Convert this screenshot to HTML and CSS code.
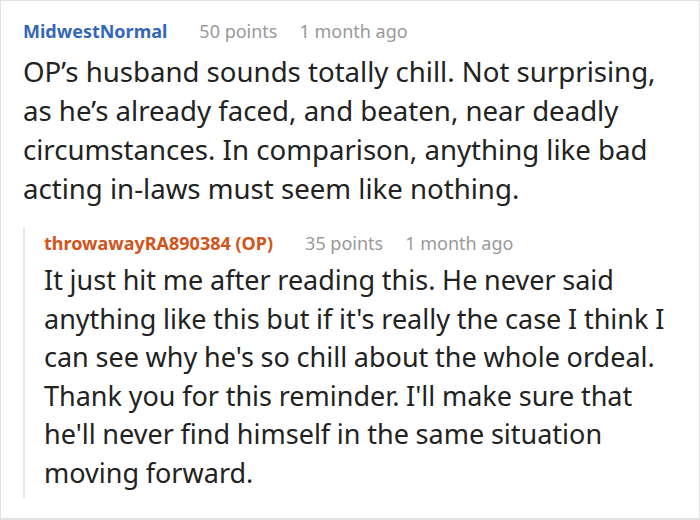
FILE: index.html
```html
<!DOCTYPE html>
<html>
<head>
<meta charset="utf-8">
<link rel="stylesheet" href="styles.css">
</head>
<body>
<div class="frame">
  <div class="comment">
    <div class="meta">
      <span class="user">MidwestNormal</span>
      <span class="info">50 points</span>
      <span class="info">1 month ago</span>
    </div>
    <p class="text main-text">OP’s husband sounds totally chill. Not surprising, as he’s already faced, and beaten, near deadly circumstances. In comparison, anything like bad acting in-laws must seem like nothing.</p>
    <div class="reply">
      <div class="meta">
        <span class="user op">throwawayRA890384 (OP)</span>
        <span class="info">35 points</span>
        <span class="info">1 month ago</span>
      </div>
      <p class="text reply-text">It just hit me after reading this. He never said anything like this but if it's really the case I think I can see why he's so chill about the whole ordeal. Thank you for this reminder. I'll make sure that<br>he'll never find himself in the same situation moving forward.</p>
    </div>
  </div>
</div>
</body>
</html>
```

FILE: styles.css
```css
html, body {
  margin: 0;
  padding: 0;
  background: #fff;
}
.frame {
  width: 700px;
  height: 520px;
  box-sizing: border-box;
  border: 1px solid #e2e2e2;
  border-bottom-width: 2px;
  overflow: hidden;
  font-family: "Noto Sans", "Open Sans", sans-serif;
  color: #222;
}
.comment {
  padding: 18px 0 0 22px;
}
.meta {
  display: flex;
  gap: 22px;
  font-size: 18px;
  line-height: 24px;
  white-space: nowrap;
}
.user {
  font-weight: 700;
  color: #3467b8;
  margin-right: 10px;
}
.user.op {
  color: #d2541b;
}
.info {
  color: #999;
}
.text {
  margin: 9px 0 0 0;
  font-size: 27px;
  line-height: 39px;
}
.main-text {
  font-size: 27.6px;
  padding-right: 12px;
}
.reply {
  margin-top: 20px;
  border-left: 2px solid #e6e6e6;
  padding: 0 0 6px 19px;
}
.reply .meta {
  padding-top: 3px;
}
.reply-text {
  margin-top: 6px;
  line-height: 38.5px;
  word-spacing: -0.3px;
}
```
